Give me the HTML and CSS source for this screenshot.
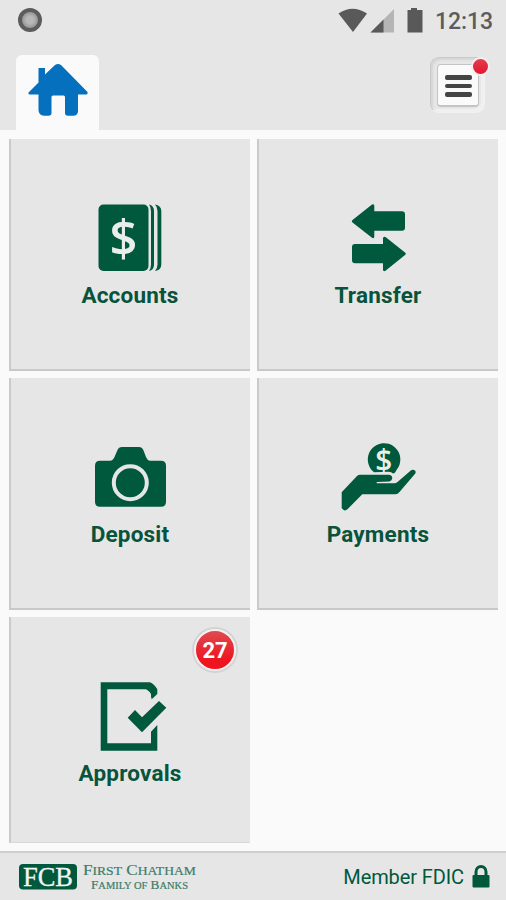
FILE: index.html
```html
<!DOCTYPE html>
<html lang="en">
<head>
    <meta charset="UTF-8">
    <meta name="viewport" content="width=device-width, initial-scale=1.0">
    <title>First Chatham Family of Banks</title>
    <link rel="stylesheet" href="styles.css">
</head>
<body>
    <header class="header">
        <div class="status-bar">
            <span class="status-dot"></span>
            <svg class="status-icons" width="88" height="26" viewBox="0 0 88 26">
                <path d="M0.500 5.500Q14.500 -4 29 5.500L15 24Z" fill="#595959"/>
                <path d="M56 1v23.500H32.500Z" fill="#b5b5b5"/>
                <path d="M45.500 11.500v13H32.500Z" fill="#595959"/>
                <path d="M73 0h6v2h5.500V24.500H69.500V2H73Z" fill="#595959"/>
            </svg>
            <span class="clock">12:13</span>
        </div>
        <div class="nav-bar">
            <a href="#" class="home-tab" aria-label="Home">
                <svg width="60" height="54" viewBox="0 0 60 54">
                    <path d="M0.500 28.500L10.500 18.500V4H17V10.500L27 1Q30 -1 33 1L59.500 28Q60 30.500 58 30.500H50V47Q50 51.800 45 51.800H40Q37 51.800 37 49V33Q37 31.500 35.500 31.500H25Q23.500 31.500 23.500 33V49Q23.500 51.800 20.500 51.800H16Q10.500 51 10.500 46V30.500H2Q0 30.500 .5 28.500Z" fill="#0570bd"/>
                </svg>
            </a>
            <button type="button" class="menu-button" aria-label="Menu">
                <span class="menu-face">
                    <span class="menu-line"></span>
                    <span class="menu-line"></span>
                    <span class="menu-line"></span>
                </span>
                <span class="menu-dot"></span>
            </button>
        </div>
    </header>

    <main class="grid">
        <a href="#" class="tile">
            <svg class="tile-icon" viewBox="0 0 80 80">
                <rect x="8.500" y="7.500" width="50" height="66.500" rx="5"/>
                <path d="M59 7.500Q64 8.500 64 14V67.500Q64 73 59 74Q61 71.500 61 67.500V14Q61 10 59 7.500Z"/>
                <path d="M65 7.500Q71.300 8.500 71.300 14V67.500Q71.300 73 65 74Q67.500 71.500 67.500 67.500V14Q67.500 10 65 7.500Z"/>
                <text class="dollar" x="33.500" y="59" font-size="51" textLength="28" lengthAdjust="spacingAndGlyphs">$</text>
            </svg>
            <span class="tile-label">Accounts</span>
        </a>
        <a href="#" class="tile">
            <svg class="tile-icon" viewBox="0 0 80 80">
                <path d="M14.500 23L34 7.500Q36.300 6.500 36.300 9V14.300H64Q67 14.300 67 17.300V30.700Q67 33.700 64 33.700H36.300V39.500Q36.300 42 34 40.800L14.500 25.500Q13 24.200 14.500 23Z"/>
                <path d="M67 55.500L47.500 40Q45 39 45 41.500V47H17Q14 47 14 50V63.300Q14 66.300 17 66.300H45V72.500Q45 75 47.500 73.800L67 58Q68.500 56.700 67 55.500Z"/>
            </svg>
            <span class="tile-label">Transfer</span>
        </a>
        <a href="#" class="tile">
            <svg class="tile-icon" viewBox="0 0 80 80">
                <path d="M10 24.700H20Q23 24.700 24.500 21L27.500 14Q28.700 11 32 11H49Q52 11 53.300 14L56 21Q57.500 24.700 60 24.700H71Q76 24.700 76 29.700V65.700Q76 70.700 71 70.700H10Q5 70.700 5 65.700V29.700Q5 24.700 10 24.700Z"/>
                <circle cx="40.300" cy="46.700" r="16.500" fill="none" stroke="#e6e6e6" stroke-width="4"/>
            </svg>
            <span class="tile-label">Deposit</span>
        </a>
        <a href="#" class="tile">
            <svg class="tile-icon" viewBox="0 0 80 80">
                <path d="M36 36.300A16.300 16.300 0 1 1 58.500 34Q57 37.500 55 37.500Q53.500 35.700 50.500 35.700Z"/>
                <text class="dollar" x="45.700" y="34.500" font-size="30" textLength="17" lengthAdjust="spacingAndGlyphs">$</text>
                <path d="M3.700 56.300L19 40Q20.200 38.700 22 38.700H50.500Q54.300 38.700 54.300 42.300Q54 44.500 51.500 45.500L38.700 46V47.300H55.500Q58 47.500 59.500 46L72.500 34.700Q74 33.500 76 34Q78.500 35 77.300 37.500L61.500 56Q59.800 58.300 57.500 58.300H24.300L9.700 73Q8 74.800 6 74.300L3.700 72.300Z"/>
            </svg>
            <span class="tile-label">Payments</span>
        </a>
        <a href="#" class="tile tile-short">
            <svg class="tile-icon" viewBox="0 0 80 80">
                <path d="M10.700 7.300H60Q64 9 67.300 14.300V19L61.700 24.300L61 21.500Q62 17.500 56 14.300H17.300V68.300H61V56.700L67.300 50V75.700H10.700Z"/>
                <path d="M37.700 42.700L45 35L52 42.300L69 26L76.300 32.700L52 57.300Z"/>
            </svg>
            <span class="tile-label">Approvals</span>
            <span class="badge">27</span>
        </a>
    </main>

    <footer class="footer">
        <svg class="logo" width="180" height="34" viewBox="0 0 180 34">
            <rect x="1" y="2" width="58" height="25.500" rx="4" fill="#00583d"/>
            <text x="5" y="23.500" font-size="27" fill="#f2f5f3" stroke="#f2f5f3" stroke-width="0.300" textLength="50" lengthAdjust="spacingAndGlyphs">FCB</text>
            <g fill="#3f7c67" stroke="#3f7c67" stroke-width="0.200">
                <text x="65" y="13" font-size="15" textLength="113" lengthAdjust="spacingAndGlyphs">F<tspan font-size="12">IRST</tspan> C<tspan font-size="12">HATHAM</tspan></text>
                <text x="73" y="26.500" font-size="12" textLength="97" lengthAdjust="spacingAndGlyphs">F<tspan font-size="9.500">AMILY OF</tspan> B<tspan font-size="9.500">ANKS</tspan></text>
            </g>
        </svg>
        <div class="member">
            <span class="member-text">Member FDIC</span>
            <svg class="lock" width="18" height="23" viewBox="0 0 18 23">
                <path d="M4 11V7a5 5.500 0 0 1 10 0v4" fill="none" stroke="#00583d" stroke-width="3"/>
                <rect x="0.500" y="10" width="17" height="12.500" rx="1" fill="#00583d"/>
            </svg>
        </div>
    </footer>
</body>
</html>
```
FILE: styles.css
```css
* {
    box-sizing: border-box;
}

body {
    margin: 0;
    height: 900px;
    display: flex;
    flex-direction: column;
    font-family: Roboto, Arial, sans-serif;
    background-color: #fafafa;
    color: #00583d;
    overflow: hidden;
}

a {
    color: inherit;
    text-decoration: none;
}

.header {
    height: 130px;
    background-color: #e6e6e6;
}

.status-bar {
    height: 41px;
    display: flex;
    align-items: center;
    padding: 0 12px 0 18px;
}

.status-dot {
    width: 24px;
    height: 24px;
    margin-top: -1px;
    border: 4px solid #5c5c5c;
    border-radius: 50%;
    background: radial-gradient(circle, #b8b8b8 30%, #929292 75%);
}

.status-icons {
    margin-left: auto;
}

.clock {
    width: 59px;
    margin-left: 9px;
    padding-top: 2px;
    font-size: 23px;
    font-weight: 500;
    letter-spacing: -0.1px;
    color: #5c5c5c;
}

.nav-bar {
    display: flex;
    justify-content: space-between;
    align-items: flex-start;
    padding: 14px 21px 0 16px;
}

.home-tab {
    width: 83px;
    height: 75px;
    padding: 9px 0 0 12px;
    border-radius: 6px 6px 0 0;
    background-color: #fafafa;
}

.menu-button {
    position: relative;
    width: 55px;
    height: 56px;
    margin-top: 2px;
    padding: 6px;
    border: 1px solid;
    border-color: #c9c9c9 #f2f2f2 #f2f2f2 #c9c9c9;
    border-radius: 9px;
    background-color: #e6e6e6;
    box-shadow: inset 2px 2px 2px #d6d6d6, inset -3px -3px 1px #f0f0f0;
}

.menu-face {
    width: 42px;
    height: 43px;
    display: flex;
    flex-direction: column;
    align-items: center;
    justify-content: center;
    gap: 4px;
    padding-top: 2px;
    border: 1px solid #c4c4c4;
    border-bottom-width: 2px;
    border-radius: 4px;
    background-color: #fafafa;
}

.menu-line {
    width: 27px;
    height: 4.500px;
    border-radius: 2px;
    background-color: #444;
}

.menu-dot {
    position: absolute;
    top: -1px;
    right: -6px;
    width: 19px;
    height: 19px;
    border: 2px solid #f5eeee;
    border-radius: 50%;
    background: linear-gradient(#e63a4e, #e2182f);
}

.grid {
    display: grid;
    grid-template-columns: 241px 241px;
    gap: 7px;
    padding: 9px 8px 0 9px;
    height: 721px;
    align-content: start;
}

.tile {
    position: relative;
    height: 232px;
    display: flex;
    flex-direction: column;
    align-items: center;
    padding: 58px 2px 0 0;
    border-left: 2px solid #cacaca;
    border-bottom: 2px solid #c8c8c8;
    background-color: #e6e6e6;
}

.tile-short {
    height: 226px;
    border-bottom-width: 1px;
    border-bottom-color: #d8d8d8;
}

.tile-icon {
    width: 80px;
    height: 80px;
    fill: #00583d;
}

.dollar {
    fill: #e9eeeb;
    font-family: "Open Sans", sans-serif;
    font-weight: 600;
    text-anchor: middle;
}

.tile-label {
    margin-top: 5px;
    padding-left: 1px;
    font-size: 22.500px;
    font-weight: 700;
    line-height: 27px;
    letter-spacing: 0.2px;
    color: #07533b;
}

.badge {
    position: absolute;
    top: 12px;
    right: 14px;
    width: 42px;
    height: 42px;
    border: 2px solid #f4f0f0;
    border-radius: 50%;
    background: linear-gradient(#e04a50, #ee1521 75%);
    box-shadow: 0 0 0 2px #d3d3d3;
    color: #fff;
    font-size: 22px;
    font-weight: 700;
    line-height: 39px;
    text-align: center;
}

.footer {
    height: 49px;
    display: flex;
    align-items: flex-start;
    justify-content: space-between;
    padding: 9px 16px 0 18px;
    border-top: 2px solid #cfcfcf;
    background-color: #e6e6e6;
}

.logo {
    font-family: "Liberation Serif", "Times New Roman", serif;
}

.member {
    display: flex;
    align-items: flex-start;
    gap: 8px;
    padding-top: 3px;
}

.member-text {
    font-size: 20px;
    line-height: 24px;
    letter-spacing: -0.1px;
}
```
